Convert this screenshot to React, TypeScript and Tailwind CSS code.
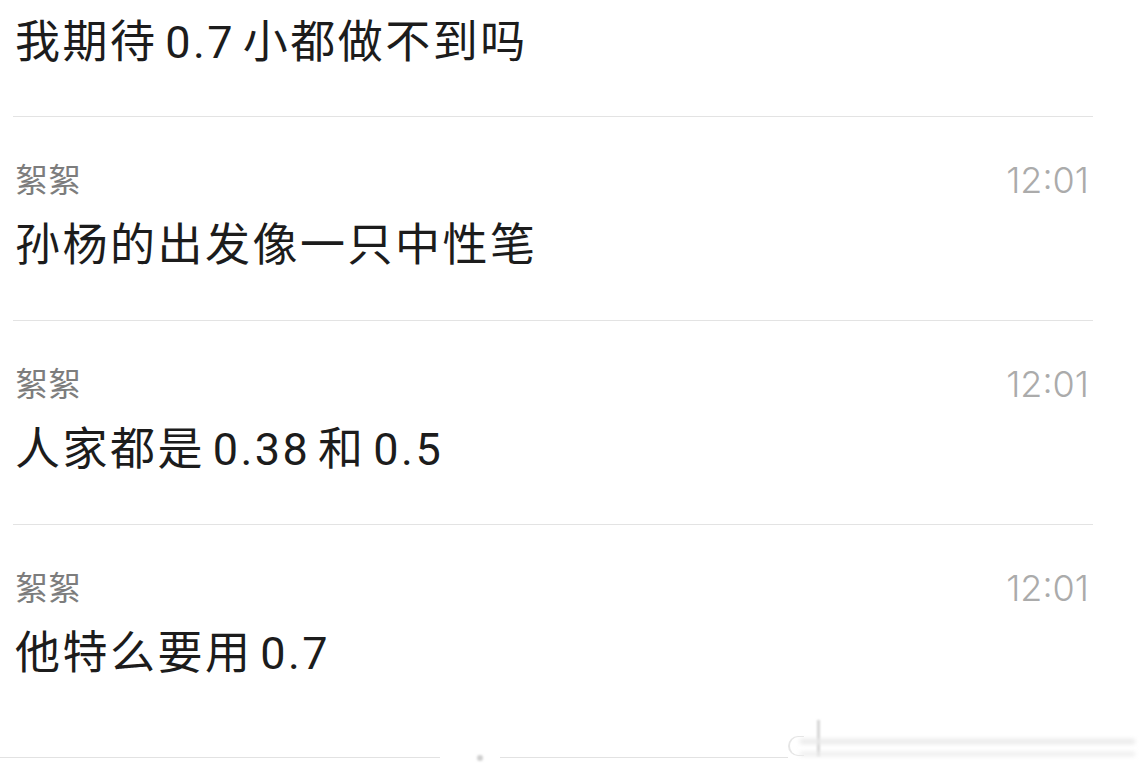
import React from "react";

const font = { fontFamily: 'Inter, "Noto Sans CJK SC", sans-serif' };

const mainText =
  "pl-[2px] text-[45px] leading-[60px] text-[#1c1c1c] tracking-[2.5px] [word-spacing:-6px] font-['Roboto','Noto_Sans_CJK_SC',sans-serif]";

function Block({ name, time, text }: { name: string; time: string; text: string }) {
  return (
    <div>
      <div className="h-px bg-[#e3e3e3]" />
      <div className="pt-[43px] flex items-center justify-between h-[83px] pl-[2px] pr-[4px]">
        <span className="text-[33px] leading-[40px] text-[#7d7d7d]">{name}</span>
        <span className="text-[36px] leading-[40px] text-[#ababab] font-light">{time}</span>
      </div>
      <div className={`pt-[16px] pb-[44px] ${mainText}`}>{text}</div>
    </div>
  );
}

export default function App() {
  return (
    <div className="w-[1141px] h-[770px] bg-white overflow-hidden flex flex-col" style={font}>
      <div className="ml-[13px] w-[1080px]">
        <div className={`pt-[13px] pb-[43px] ${mainText}`}>我期待 0.7 小都做不到吗</div>
        <Block name="絮絮" time="12:01" text="孙杨的出发像一只中性笔" />
        <Block name="絮絮" time="12:01" text="人家都是 0.38 和 0.5" />
        <Block name="絮絮" time="12:01" text="他特么要用 0.7" />
      </div>
      <div className="-mt-[8px] flex items-end h-[38px] shrink-0">
        <div className="w-[440px] h-px bg-[#e2e2e2]" />
        <div className="w-[37px]" />
        <div className="w-[6px] h-[6px] -mb-[3px] rounded-full bg-[#cfcfcf] blur-[1px]" />
        <div className="w-[17px]" />
        <div className="w-[288px] h-px bg-[#e2e2e2]" />
        <div className="relative flex-1 h-[38px]">
          <div className="absolute left-0 top-[16px] w-[16px] h-[20px] rounded-l-full border-l-2 border-y border-[#e6e6e6] blur-[0.5px]" />
          <div className="absolute left-[29px] top-0 w-[3px] h-[36px] bg-[#d6d6d6] blur-[1px]" />
          <div className="absolute left-[12px] top-[19px] right-[6px] h-[5px] bg-[#e9e9e9] blur-[2px]" />
          <div className="absolute left-[12px] top-[32px] right-[6px] h-[4px] bg-[#ececec] blur-[2px]" />
        </div>
      </div>
    </div>
  );
}
